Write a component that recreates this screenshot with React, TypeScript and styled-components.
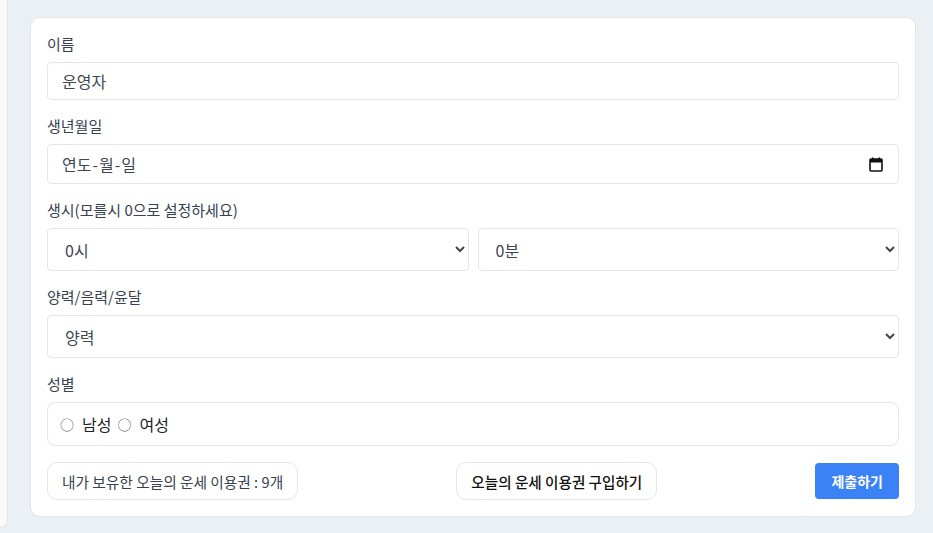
import React from "react";
import styled, { createGlobalStyle } from "styled-components";

const Global = createGlobalStyle`
  html, body { margin: 0; padding: 0; }
  body {
    background: #ebf0f5;
    font-family: "Noto Sans CJK KR", "Noto Sans", sans-serif;
    color: #374151;
  }
  * { box-sizing: border-box; }
`;

const Page = styled.div`
  display: flex;
  height: 533px;
  overflow: hidden;
`;

const SideEdge = styled.div`
  width: 8px;
  height: 528px;
  background: #f8fafc;
  border-right: 1px solid #e2e6ea;
  border-bottom: 1px solid #e2e6ea;
  border-bottom-right-radius: 8px;
  flex: none;
`;

const Main = styled.div`
  flex: 1;
  padding: 17px 17px 0 22px;
`;

const Card = styled.form`
  background: #ffffff;
  border: 1px solid #e3e6ea;
  border-radius: 10px;
  padding: 16px;
  display: flex;
  flex-direction: column;
  gap: 16px;
`;

const Field = styled.div`
  display: flex;
  flex-direction: column;
  gap: 8px;
`;

const Label = styled.label`
  font-size: 15px;
  line-height: 20px;
  color: #374151;
`;

const controlBase = `
  width: 100%;
  border: 1px solid #e3e6ea;
  border-radius: 4px;
  background: #ffffff;
  font-family: "Noto Sans CJK KR", "Noto Sans", sans-serif;
  font-size: 16px;
  color: #3f4754;
  padding: 0 14px;
  outline: none;
`;

const TextInput = styled.input`
  ${controlBase}
  height: 38px;
`;

const DateBox = styled.div`
  ${controlBase}
  height: 40px;
  display: flex;
  align-items: center;
  justify-content: space-between;
  padding: 0 15px 0 14px;
`;

const DateParts = styled.span`
  display: inline-flex;
  align-items: center;
  gap: 1px;
`;

const Select = styled.select`
  ${controlBase}
  height: 43px;
  padding: 0 10px 0 13px;
`;

const Row = styled.div`
  display: flex;
  gap: 9px;
`;

const RadioBox = styled.div`
  height: 44px;
  border: 1px solid #e3e6ea;
  border-radius: 8px;
  display: flex;
  align-items: center;
  padding: 0 12px;
  font-size: 16px;
  color: #1f1f1f;
  gap: 6px;
`;

const RadioLabel = styled.span`
  display: inline-flex;
  align-items: center;
  gap: 12px;
`;

const Circle = styled.span`
  font-size: 14px;
  line-height: 1;
  color: #666;
  display: inline-block;
  width: 10px;
  text-align: center;
`;

const Footer = styled.div`
  display: flex;
  align-items: center;
  justify-content: space-between;
  height: 38px;
`;

const PillButton = styled.button<{ $strong?: boolean }>`
  height: 38px;
  padding: 0 ${(p) => (p.$strong ? 14 : 14)}px;
  border: 1px solid #e3e6ea;
  border-radius: 10px;
  background: #ffffff;
  font-family: "Noto Sans CJK KR", "Noto Sans", sans-serif;
  font-size: ${(p) => (p.$strong ? 14.6 : 14.7)}px;
  color: ${(p) => (p.$strong ? "#111111" : "#374151")};
  font-weight: ${(p) => (p.$strong ? 500 : 400)};
  cursor: pointer;
`;

const Submit = styled.button`
  height: 36px;
  padding: 0 16px;
  border: none;
  border-radius: 4px;
  background: #3b82f6;
  color: #ffffff;
  font-family: "Noto Sans CJK KR", "Noto Sans", sans-serif;
  font-size: 14px;
  font-weight: 700;
  cursor: pointer;
`;

function CalendarIcon() {
  return (
    <svg width="14" height="15" viewBox="0 0 14 15" aria-hidden="true">
      <rect x="3" y="0.5" width="1.5" height="2.5" fill="#111" />
      <rect x="9.5" y="0.5" width="1.5" height="2.5" fill="#111" />
      <rect x="1" y="2" width="12" height="12" rx="1" fill="none" stroke="#111" strokeWidth="1.6" />
      <rect x="1" y="2" width="12" height="3.5" fill="#111" />
    </svg>
  );
}

export default function App() {
  return (
    <>
      <Global />
      <Page>
        <SideEdge />
        <Main>
          <Card onSubmit={(e) => e.preventDefault()}>
            <Field>
              <Label>이름</Label>
              <TextInput defaultValue="운영자" />
            </Field>
            <Field>
              <Label>생년월일</Label>
              <DateBox>
                <DateParts>
                  <span>연도</span><span>-</span><span>월</span><span>-</span><span>일</span>
                </DateParts>
                <CalendarIcon />
              </DateBox>
            </Field>
            <Field>
              <Label>생시(모를시 0으로 설정하세요)</Label>
              <Row>
                <Select defaultValue="0">
                  {Array.from({ length: 24 }, (_, i) => (
                    <option key={i} value={String(i)}>{i}시</option>
                  ))}
                </Select>
                <Select defaultValue="0">
                  {Array.from({ length: 60 }, (_, i) => (
                    <option key={i} value={String(i)}>{i}분</option>
                  ))}
                </Select>
              </Row>
            </Field>
            <Field>
              <Label>양력/음력/윤달</Label>
              <Select defaultValue="solar">
                <option value="solar">양력</option>
                <option value="lunar">음력</option>
                <option value="leap">윤달</option>
              </Select>
            </Field>
            <Field>
              <Label>성별</Label>
              <RadioBox>
                <RadioLabel><Circle>○</Circle>남성</RadioLabel>
                <RadioLabel><Circle>○</Circle>여성</RadioLabel>
              </RadioBox>
            </Field>
            <Footer>
              <PillButton type="button">내가 보유한 오늘의 운세 이용권 : 9개</PillButton>
              <PillButton type="button" $strong>오늘의 운세 이용권 구입하기</PillButton>
              <Submit type="submit">제출하기</Submit>
            </Footer>
          </Card>
        </Main>
      </Page>
    </>
  );
}
